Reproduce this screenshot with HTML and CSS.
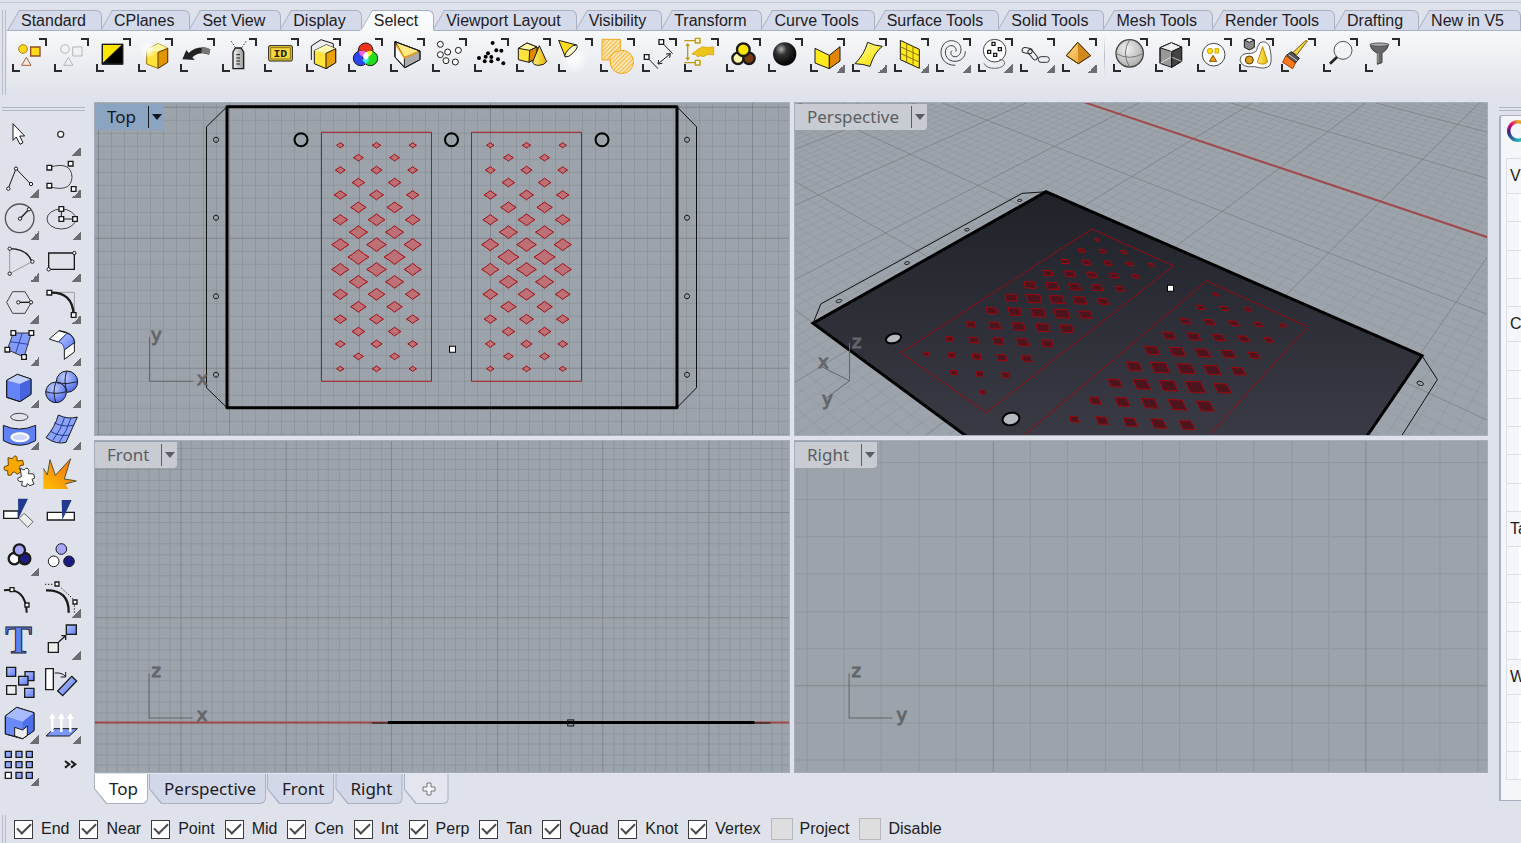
FILE: index.html
```html
<!DOCTYPE html>
<html lang="en">
<head>
<meta charset="utf-8">
<title>CAD workspace</title>
<link rel="stylesheet" href="styles.css">
</head>
<body>
<svg class="defs" width="0" height="0" aria-hidden="true">
  <defs>
    <linearGradient id="yl" x1="0" y1="0" x2="1" y2="1"><stop offset="0" stop-color="#fffbd0"/><stop offset=".5" stop-color="#ffee40"/><stop offset="1" stop-color="#f2d400"/></linearGradient>
    <linearGradient id="or" x1="0" y1="0" x2="1" y2="1"><stop offset="0" stop-color="#ffd98a"/><stop offset="1" stop-color="#e89a20"/></linearGradient>
    <linearGradient id="bl" x1="0" y1="0" x2="1" y2="1"><stop offset="0" stop-color="#b9c6ff"/><stop offset="1" stop-color="#5b7bf5"/></linearGradient>
    <linearGradient id="gr" x1="0" y1="0" x2="1" y2="0"><stop offset="0" stop-color="#f4f4f4"/><stop offset="1" stop-color="#9a9a9a"/></linearGradient>
    <linearGradient id="fire" x1="0" y1="1" x2="1" y2="0"><stop offset="0" stop-color="#ffc000"/><stop offset="1" stop-color="#ee6a1c"/></linearGradient>
    <linearGradient id="cone" x1="0" y1="0" x2="1" y2="0"><stop offset="0" stop-color="#fff27a"/><stop offset="1" stop-color="#e0b400"/></linearGradient>
    <radialGradient id="bk" cx=".35" cy=".3" r=".7"><stop offset="0" stop-color="#b0b0b0"/><stop offset=".35" stop-color="#333"/><stop offset="1" stop-color="#000"/></radialGradient>
    <radialGradient id="sp" cx=".4" cy=".35" r=".7"><stop offset="0" stop-color="#f0f0f0"/><stop offset="1" stop-color="#aaa"/></radialGradient>
    <radialGradient id="bs" cx=".4" cy=".3" r=".8"><stop offset="0" stop-color="#c3ceff"/><stop offset="1" stop-color="#3d5ee6"/></radialGradient>
    <radialGradient id="glow"><stop offset="0" stop-color="#fff"/><stop offset="1" stop-color="#fff" stop-opacity="0"/></radialGradient>
    <pattern id="hatch" width="9" height="9" patternUnits="userSpaceOnUse" patternTransform="rotate(45)"><rect width="9" height="9" fill="#fdeec8"/><rect width="4" height="9" fill="#f5b942"/></pattern>
  </defs>
</svg>

<header class="ribbon">
  <div class="grip-v"></div>
  <div class="ribbon-body">
    <nav class="tabs" aria-label="Toolbars">
      <button class="tab">Standard</button><button class="tab">CPlanes</button><button class="tab">Set View</button><button class="tab">Display</button><button class="tab active">Select</button><button class="tab">Viewport Layout</button><button class="tab">Visibility</button><button class="tab">Transform</button><button class="tab">Curve Tools</button><button class="tab">Surface Tools</button><button class="tab">Solid Tools</button><button class="tab">Mesh Tools</button><button class="tab">Render Tools</button><button class="tab">Drafting</button><button class="tab">New in V5</button>
    </nav>
    <div class="toolbar">
      <button class="tool pick" aria-label="Select all"><svg viewBox="24 102 126 126"><circle cx="69" cy="147" r="13" fill="#ffd91a" stroke="#b87818"/><path d="M92 141h28v27h-28z" fill="#ffd91a" stroke="#8f4f1c" stroke-width="4"/><path d="M79 172l14 24H65z" fill="#f4ebe4" stroke="#a8623a"/></svg></button>
      <button class="tool pick" aria-label="Select none"><svg viewBox="150 102 126 126" stroke="#b5b7ba" fill="none"><circle cx="195" cy="147" r="13"/><path d="M218 141h28v27h-28zM205 172l14 24h-28z"/></svg></button>
      <button class="tool pick" aria-label="Invert selection"><svg viewBox="276 102 126 126"><path d="M307 133h61l-61 59z" fill="#ffe600"/><path d="M368 133v59h-61z"/><path d="M307 133h61v59h-61z" fill="none" stroke-width="4"/></svg></button>
      <button class="tool pick" aria-label="Select last created"><svg viewBox="402 102 126 126"><path d="M440 148l35-17 28 14v42l-29 18-34-13z" fill="#ffe23a" stroke="#9a7400"/><path d="M440 148l35-17 28 14-29 12z" fill="#fff7a0" stroke="none"/><path d="M474 157l29-12v42l-29 18z" fill="#e09400" stroke="#5a3c00"/><circle cx="444" cy="150" r="26" fill="url(#glow)" stroke="none"/></svg></button>
      <button class="tool pick" aria-label="Select previous"><svg viewBox="528 102 126 126"><path d="M547 178l12-28 7 9q29-26 65-11l-4 16q-28-12-50 8l7 8z" fill="#222" stroke="none"/><path d="M606 140q14 0 25 8l-4 16q-11-6-23-5z" fill="#777" stroke="none"/></svg></button>
      <button class="tool pick" aria-label="Select by name"><svg viewBox="654 102 126 126"><path d="M699 156l7-12h17l8 12v50h-32z" fill="url(#gr)" stroke-width="4"/><path d="M709 164h11M709 174h11M709 183h11M709 192h11"/><path d="M694 124l13 20M738 124l-13 20" fill="none" stroke-dasharray="4 5"/></svg></button>
      <button class="tool pick" aria-label="Select by ID"><svg viewBox="780 102 126 126"><rect x="806" y="137" width="71" height="46" rx="4" fill="#f5d83c"/><rect x="812" y="143" width="59" height="34" fill="none" stroke="#8a7410"/><text x="841" y="172" text-anchor="middle" class="id-text">ID</text></svg></button>
      <button class="tool pick" aria-label="Select duplicates"><svg viewBox="906 102 126 126"><path d="M934 180v-42l29-19 37 12v30" fill="#eee"/><path d="M943 152l36-18 28 12v42l-29 18-35-15z" fill="#ffe23a"/><path d="M943 152l36-18 28 12-29 14z" fill="#fff9b5" stroke="none"/><path d="M978 160l29-14v42l-29 18z" fill="#eaa000"/></svg></button>
      <button class="tool pick" aria-label="Select by color"><svg viewBox="1032 102 126 126"><circle cx="1097" cy="151" r="22" fill="#f3321c"/><circle cx="1082" cy="175" r="22" fill="#2c45f0"/><circle cx="1111" cy="175" r="22" fill="#22dc22"/><g stroke="none"><path d="M1076 154q14-4 22 3l-1 16q-19-3-21-19z" fill="#f060e0"/><path d="M1098 157q8-7 20-3-3 16-21 19z" fill="#fff02a"/><path d="M1097 172l11 8-11 12-11-12z" fill="#40e8f8"/><path d="M1090 163l8-8 8 8-1 12-8 4-7-5z" fill="#fff"/></g></svg></button>
      <button class="tool pick" aria-label="Select surfaces"><svg viewBox="1158 102 126 126"><path d="M1185 125l75 28v26l-45 24-30-32z" fill="#aaa"/><path d="M1185 125l75 28-47 20z" fill="#ffe982"/><path d="M1185 125l28 48v30l-28-32z" fill="#fff"/><path d="M1254 156l-41 17-24-38" fill="none" stroke="#f0a018" stroke-width="5"/><path d="M1185 125l75 28v26l-45 24-30-32z" fill="none"/></svg></button>
      <button class="tool pick" aria-label="Select points"><svg viewBox="1284 102 126 126" fill="#fff"><circle cx="1321" cy="133" r="9"/><circle cx="1375" cy="151" r="9"/><circle cx="1343" cy="156" r="9"/><circle cx="1321" cy="164" r="9"/><circle cx="1338" cy="182" r="9"/><circle cx="1366" cy="186" r="9"/></svg></button>
      <button class="tool pick" aria-label="Select point clouds"><svg viewBox="1410 102 126 126" stroke="none"><circle cx="1478" cy="129" r="6"/><circle cx="1489" cy="151" r="6"/><circle cx="1504" cy="152" r="6"/><circle cx="1464" cy="160" r="6"/><circle cx="1437" cy="174" r="6"/><circle cx="1457" cy="170" r="6"/><circle cx="1474" cy="171" r="6"/><circle cx="1454" cy="184" r="6"/><circle cx="1474" cy="184" r="6"/><circle cx="1494" cy="178" r="6"/><circle cx="1510" cy="190" r="6"/></svg></button>
      <button class="tool pick" aria-label="Select polysurfaces"><svg viewBox="36 102 126 126"><path d="M55 145l26-16 30 12v32l-24 14-32-8z" fill="#ffe23a"/><path d="M55 145l26-16 30 12-22 10z" fill="#fff7a0"/><path d="M89 151l22-10v32l-24 14z" fill="#e08a00"/><path d="M118 137l22 48q-8 11-24 11t-18-10z" fill="url(#cone)"/></svg></button>
      <button class="tool pick" aria-label="Select open surfaces"><svg viewBox="162 102 126 126"><circle cx="222" cy="178" r="44" fill="url(#glow)" stroke="none"/><path d="M176 121l54 14q-4 26-34 36z" fill="#ffd91a"/><path d="M230 135q6 6-9 22t-25 14q-5-6 9-22t25-14z" fill="#fff9cc"/></svg></button>
      <button class="tool pick" aria-label="Select hatches"><svg viewBox="288 102 126 126" stroke="#f0a820"><path d="M306 118h55v33a35 35 0 1 1-30 29h-25z" fill="url(#hatch)"/><path d="M328 180q4-24 34-29" fill="none"/></svg></button>
      <button class="tool pick" aria-label="Select dimensions"><svg viewBox="414 102 126 126"><path d="M477 119h14v14h-14zM433 164h14v14h-14z" fill="#fff" stroke-width="4"/><path d="M493 135l25 26M449 180l25 26M474 192l37-31M474 192l2-12M474 192l13-2M511 161l-13 1M511 161l-2 12" fill="none"/></svg></button>
      <button class="tool pick" aria-label="Select blocks"><svg viewBox="540 102 126 126" stroke="#c09a10"><path d="M553 122h50M553 188h50M563 134v43M558 138l5-6 5 6M558 173l5 6 5-6" fill="none" stroke-width="4"/><path d="M586 115h14v14h-14zM586 181h14v14h-14z" fill="#fff7d0" stroke-width="4"/><path d="M576 162l18-14 14-8 14 3 19-2v24l-17-2-14 7-9-3-8 4-5-7z" fill="#eec31c" stroke="#d9ae18"/></svg></button>
      <button class="tool pick" aria-label="Select groups"><svg viewBox="666 102 126 126" stroke-width="7"><circle cx="714" cy="175" r="17" fill="#fff6a8"/><circle cx="747" cy="175" r="17" fill="#7a3c10"/><circle cx="730" cy="149" r="19" fill="#ffe600"/></svg></button>
      <button class="tool pick" aria-label="Select by material"><svg viewBox="792 102 126 126"><circle cx="854" cy="162" r="35" fill="url(#bk)" stroke="none"/></svg></button>
      <button class="tool pick more" aria-label="Select polysurface types"><svg viewBox="918 102 126 126"><path d="M945 145l43 21v40l-43-17z" fill="#ffe81c"/><path d="M988 166l32-26v43l-32 23z" fill="#e08600"/></svg></button>
      <button class="tool pick more" aria-label="Select surface types"><svg viewBox="1044 102 126 126"><path d="M1103 127q20 10 44 12-24 18-37 60-20-7-45-8 28-28 38-64z" fill="url(#yl)"/></svg></button>
      <button class="tool pick more" aria-label="Select meshes"><svg viewBox="1170 102 126 126"><path d="M1201 121l57 27v57l-57-26z" fill="#ffe81c"/><path d="M1220 130v57M1239 139v57M1201 140l57 27M1201 160l57 26" fill="none" stroke="#8a7800"/></svg></button>
      <button class="tool pick more" aria-label="Select curves"><svg viewBox="1296 102 126 126" fill="none" stroke="#444"><path d="M1366 196C1335 196 1323 175 1323 158C1323 135 1338 122 1354 122C1373 122 1384 135 1383 150C1382 166 1370 172 1362 170C1352 167 1350 157 1356 152M1396 154C1396 172 1382 184 1365 184C1347 184 1336 172 1336 156C1337 142 1346 136 1356 137C1366 139 1371 148 1367 155"/></svg></button>
      <button class="tool pick more" aria-label="Select control points"><svg viewBox="1422 102 126 126"><circle cx="1484" cy="152" r="34" fill="#fff" stroke="#444"/><g fill="#fff" stroke-width="4"><path d="M1476 127h9v9h-9zM1495 143h9v9h-9zM1463 151h9v9h-9zM1481 160h9v9h-9z"/></g><path d="M1452 190q8 16 34 15 28-2 28-18-3-10-16-9" fill="none" stroke="#666"/></svg></button>
      <button class="tool pick more" aria-label="Select chain"><svg viewBox="48 102 126 126" fill="none" stroke="#333"><rect x="66" y="144" width="31" height="16" rx="8" transform="rotate(12 82 152)"/><rect x="80" y="157" width="36" height="14" rx="7" transform="rotate(50 98 164)"/><rect x="115" y="170" width="33" height="17" rx="8"/></svg></button>
      <button class="tool pick more" aria-label="Select objects"><svg viewBox="174 102 126 126"><path d="M233 127l-34 40 36 24 37-24z" fill="url(#or)" stroke="#6a4408"/><path d="M233 127l2 64 37-24z" fill="#d08a1c" stroke="none"/><path d="M233 127l-34 40 36 24 37-24z" fill="none" stroke="#4a2c00"/></svg></button>
      <span class="divider"></span>
      <button class="tool pick" aria-label="Sphere filter"><svg viewBox="327 102 126 126"><circle cx="389" cy="160" r="41" fill="url(#sp)" stroke="#444" stroke-width="4"/><path d="M389 119q-26 40 0 82M348 160q40 24 82 0" fill="none" stroke="#777"/></svg></button>
      <button class="tool pick" aria-label="Box filter"><svg viewBox="453 102 126 126"><path d="M480 143l34-15 31 13v43l-30 18-35-12z" fill="#999"/><path d="M480 143l34-15 31 13-30 14z" fill="#eee"/><path d="M515 155l30-14v43l-30 18z" fill="#444"/><path d="M514 128v43l31 13M514 171l-34 19" fill="none" stroke="#fff" stroke-width="2"/><path d="M515 155v47M480 143v47" fill="none"/></svg></button>
      <button class="tool pick" aria-label="Boundary filter"><svg viewBox="579 102 126 126"><circle cx="641" cy="164" r="34" fill="#fff" stroke="#444"/><circle cx="630" cy="153" r="8" fill="#ffdc1c" stroke="#d8a800"/><path d="M645 146h11v13h-11z" fill="#ffdc1c" stroke="#d8a800"/><path d="M639 166l11 18h-22z" fill="#f0a000" stroke="#8a4c10"/></svg></button>
      <button class="tool pick" aria-label="Lasso filter"><svg viewBox="705 102 126 126"><path d="M780 128q18-8 28 10 10 40 2 58-14 14-46 4-40 4-44-20 2-22 32-20 20-2 20-18z" fill="#fff" stroke="#555"/><path d="M733 120l15-5 15 5v22l-15 8-15-8z" fill="#888"/><path d="M733 120l15-5 15 5-15 7z" fill="#eee"/><circle cx="748" cy="180" r="12" fill="#e0a018" stroke="#5a3c08"/><path d="M788 140l15 46q-14 12-31 1z" fill="url(#cone)" stroke="#d08000"/></svg></button>
      <button class="tool pick" aria-label="Paint filter"><svg viewBox="831 102 126 126"><path d="M922 123l-32 42-12-7 36-34q6-4 8-1z" fill="#f0d040" stroke="#806000"/><path d="M874 155l24 20-12 14-28-22z" fill="#555"/><path d="M858 167l28 22-8 17-30-19z" fill="#ff7a1c" stroke="#a03c00"/><path d="M866 164l26 19" stroke="#ddd"/></svg></button>
      <button class="tool pick" aria-label="Find"><svg viewBox="957 102 126 126"><circle cx="1029" cy="151" r="27" fill="#f2f3f5" stroke="#555"/><path d="M1011 171l-21 20" fill="none" stroke="#222" stroke-width="8"/><path d="M1012 150q2-16 20-18" stroke="#fff" fill="none" stroke-width="5"/></svg></button>
      <button class="tool pick" aria-label="Selection filter"><svg viewBox="1083 102 126 126"><path d="M1110 134h56q-2 14-20 26v28l-14 5v-33q-20-10-22-26z" fill="#666" stroke="#444"/><ellipse cx="1138" cy="134" rx="28" ry="5" fill="#aaa" stroke="#555"/><path d="M1134 160v28" stroke="#aaa"/></svg></button>
    </div>
  </div>
</header>

<main class="workspace">
  <aside class="side">
    <div class="grip-h"></div>
    <div class="side-tools">
      <button class="tool" aria-label="Cancel"><svg viewBox="0 66 126 126"><path d="M39 86v50l10-10 11 22 9-5-10-20h15z" fill="#fff"/></svg></button>
      <button class="tool more" aria-label="Point"><svg viewBox="126 66 126 126"><circle cx="182" cy="118" r="9" fill="#fff" stroke="#333" stroke-width="4"/></svg></button>
      <button class="tool more" aria-label="Polyline"><svg viewBox="0 192 126 126" fill="#fff"><path d="M25 280l23-59 44 46" fill="none"/><circle cx="48" cy="221" r="5"/><circle cx="25" cy="281" r="5"/><circle cx="93" cy="267" r="5"/></svg></button>
      <button class="tool more" aria-label="Curve"><svg viewBox="126 192 126 126" fill="#fff"><path d="M148 217q66-20 68 30-3 46-68 28" fill="none" stroke="#444"/><path d="M141 211h14v14h-14zM205 199h14v14h-14zM141 265h14v14h-14zM214 275h14v14h-14z" stroke-width="4"/></svg></button>
      <button class="tool more" aria-label="Circle"><svg viewBox="0 318 126 126" fill="#fff"><circle cx="59" cy="370" r="43" fill="none" stroke="#555" stroke-width="4"/><path d="M60 371l27-28" stroke-width="4"/><circle cx="60" cy="371" r="5"/><circle cx="87" cy="343" r="5"/></svg></button>
      <button class="tool more" aria-label="Ellipse"><svg viewBox="126 318 126 126" fill="#fff"><ellipse cx="184" cy="372" rx="43" ry="30" fill="none" stroke="#444"/><path d="M184 342v30h40" fill="none"/><path d="M177 335h14v14h-14zM177 365h14v14h-14zM218 365h14v14h-14z" stroke-width="4"/></svg></button>
      <button class="tool more" aria-label="Arc"><svg viewBox="0 444 126 126" fill="#fff"><path d="M29 461v75l67-36" fill="none" stroke="#999"/><path d="M29 461q52 0 67 39" fill="none" stroke-width="4"/><circle cx="29" cy="461" r="5"/><circle cx="29" cy="536" r="5"/><circle cx="97" cy="500" r="5"/></svg></button>
      <button class="tool more" aria-label="Rectangle"><svg viewBox="126 444 126 126" fill="#fff"><path d="M146 474h77v49h-77z" fill="none" stroke-width="4"/><circle cx="223" cy="474" r="5"/><circle cx="146" cy="523" r="5"/></svg></button>
      <button class="tool more" aria-label="Polygon"><svg viewBox="0 570 126 126" fill="#fff"><path d="M38 590h37l19 32-19 33H38l-18-33z" fill="none" stroke="#444"/><path d="M55 622h38" stroke-width="4"/><circle cx="55" cy="622" r="5"/><circle cx="93" cy="622" r="5"/></svg></button>
      <button class="tool more" aria-label="Fillet curves"><svg viewBox="126 570 126 126" fill="#fff"><path d="M148 592h75v68" fill="none" stroke="#999"/><path d="M148 593q70-4 73 67" fill="none" stroke-width="7"/><path d="M141 586h14v14h-14zM214 653h14v14h-14z" stroke-width="4"/></svg></button>
      <button class="tool more" aria-label="Surface from points"><svg viewBox="0 696 126 126"><path d="M40 714h54l-22 72-50-22z" fill="#839bfa" stroke="#333"/><path d="M67 714l-20 60M31 740l55 8" fill="none" stroke="#2c45a8"/><g fill="#fff" stroke-width="4"><path d="M33 707h14v14H33zM87 707h14v14H87zM15 757h14v14H15zM65 779h14v14H65z"/></g></svg></button>
      <button class="tool more" aria-label="Loft"><svg viewBox="126 696 126 126" fill="#fff"><path d="M148 732l29-25 24 8-26 26z"/><path d="M176 741l25-26q22 8 23 28l-31 22q-1-20-17-24z" fill="url(#bl)" stroke="#3050b8"/><path d="M193 765l30-22v28l-30 22z"/><path d="M177 707q46 4 47 38" fill="none"/></svg></button>
      <button class="tool more" aria-label="Box"><svg viewBox="0 822 126 126"><path d="M20 856l32-18 41 14v46l-33 22-40-13z" fill="#6684fa"/><path d="M20 856l32-18 41 14-33 15z" fill="#c2ceff" stroke="none"/><path d="M60 867l33-15v46l-33 22z" fill="#4564de" stroke="none"/><path d="M20 856l32-18 41 14v46l-33 22-40-13z" fill="none"/></svg></button>
      <button class="tool more" aria-label="Boolean union"><svg viewBox="126 822 126 126"><circle cx="201" cy="860" r="32" fill="url(#bs)"/><circle cx="168" cy="892" r="31" fill="url(#bs)"/><path d="M137 890q30 10 62 0M168 861q-12 30 0 62M172 864q28 6 60-4M200 828q-10 30 0 60" fill="none" stroke="#223"/></svg></button>
      <button class="tool more" aria-label="Cylinder surface"><svg viewBox="0 948 126 126"><ellipse cx="58" cy="966" rx="26" ry="11" fill="none" stroke="#444"/><path d="M10 991q48 22 97 0v46q-48 28-97 0z" fill="#6080f5"/><ellipse cx="60" cy="1027" rx="26" ry="12" fill="#cfd8ff" stroke="#fff" stroke-width="6"/></svg></button>
      <button class="tool more" aria-label="Mesh"><svg viewBox="126 948 126 126"><path d="M175 960q28 14 57 6l-34 76q-28 8-60-14 28-34 37-68z" fill="#8ba3fb"/><path d="M194 967q-10 36-36 70M213 969q-12 38-36 74M163 984q30 14 60 6M150 1008q28 18 58 12" fill="none" stroke="#223a90"/></svg></button>
      <button class="tool" aria-label="Join"><svg viewBox="0 39 126 126"><path d="M24 53l13 3q8-14 14-4v11l17-2 3 14-11 2q-6 12 4 17l-12 9-8-7q-9-1-10 9l-10 1-1-14q-14 2-10-12l12-4z" fill="#f9a800" stroke="#704400"/><path d="M61 85l11 5q10-12 15 2l-2 9 16 1 3 12-8 4 6 14-12 5-8-6-3 9-14-3 2-13q-16 3-13-10l10-4z" fill="#fff" stroke="#333"/></svg></button>
      <button class="tool" aria-label="Explode"><svg viewBox="126 39 126 126"><path d="M130 147V85l12 20 8-46 16 47 46-50-19 61 36 4-33 12 10 14z" fill="url(#fire)" stroke="none"/><path d="M130 85l12 20 8-46 16 47 46-50-19 61 36 6-34 9" fill="none" stroke="#553"/></svg></button>
      <button class="tool" aria-label="Trim"><svg viewBox="0 165 126 126"><path d="M11 213h44v22H11z" fill="#fff" stroke-width="4"/><path d="M57 235l15-15 27 25-16 17z" fill="#eee" stroke="#666"/><path d="M54 176h30l-29 60z" fill="#23398e" stroke="none"/></svg></button>
      <button class="tool" aria-label="Split"><svg viewBox="126 165 126 126"><path d="M142 217h81v23h-81z" fill="#fff" stroke-width="4"/><path d="M185 180h30l-28 60z" fill="#23398e" stroke="none"/></svg></button>
      <button class="tool more" aria-label="Group"><svg viewBox="0 291 126 126" stroke-width="7"><circle cx="43" cy="356" r="17" fill="#fff"/><circle cx="74" cy="356" r="17" fill="#1c1c80"/><circle cx="58" cy="330" r="17" fill="#a8a6fa"/></svg></button>
      <button class="tool" aria-label="Ungroup"><svg viewBox="126 291 126 126"><circle cx="184" cy="327" r="16" fill="#a8a6fa"/><circle cx="161" cy="364" r="16" fill="#fff"/><circle cx="207" cy="364" r="16" fill="#1c1c80"/></svg></button>
      <button class="tool" aria-label="Edit points"><svg viewBox="0 417 126 126"><path d="M12 451q66-8 68 67" fill="none" stroke-width="6"/><path d="M30 443h12v12H30zM75 489h12v12H75z" fill="#fff" stroke-width="4"/></svg></button>
      <button class="tool more" aria-label="Control points"><svg viewBox="126 417 126 126"><path d="M138 451q70-2 68 67" fill="none" stroke-width="7"/><path d="M135 433h26M184 444l36 34M223 496v24" fill="none" stroke-dasharray="4 5"/><path d="M165 426h12v12h-12zM219 480h12v12h-12z" fill="#fff" stroke-width="4"/></svg></button>
      <button class="tool" aria-label="Text"><svg viewBox="0 543 126 126"><text x="56" y="638" text-anchor="middle" class="t-icon">T</text></svg></button>
      <button class="tool more" aria-label="Move"><svg viewBox="126 543 126 126"><path d="M145 608h30v29h-30z" fill="#eee" stroke-width="4"/><path d="M199 555h30v28h-30z" fill="url(#bl)" stroke-width="4"/><path d="M176 606l20-18M184 587h13v13" fill="none" stroke-width="4"/></svg></button>
      <button class="tool" aria-label="Copy"><svg viewBox="0 669 126 126" fill="url(#bl)" stroke-width="4"><path d="M20 682h27v27H20z"/><path d="M75 695h27v27H75z"/><path d="M56 709h28v26H56z"/><path d="M74 745h28v27H74z"/><path d="M20 737h28v26H20z" fill="#eee"/></svg></button>
      <button class="tool" aria-label="Rotate"><svg viewBox="126 669 126 126"><path d="M137 686h23v63h-23z" fill="#fff" stroke-width="4"/><path d="M215 709l15 14-42 44-15-14z" fill="url(#bl)" stroke-width="4"/><path d="M164 699q22-2 32 10M197 696v15h-15" fill="none"/></svg></button>
      <button class="tool more" aria-label="Boolean difference"><svg viewBox="0 795 126 126"><path d="M16 828l34-26 52 16v54l-34 24-52-14z" fill="#6a8afa"/><path d="M16 828l34-26 52 16-34 27z" fill="#a9bbff" stroke="none"/><path d="M68 845l34-27v54l-34 24z" fill="#4e70ea" stroke="none"/><path d="M16 828l34-26 52 16v54l-34 24-52-14z" fill="none"/><path d="M44 862l24 8 14-12v28l-14 10-24-8z" fill="#eee"/></svg></button>
      <button class="tool more" aria-label="Project to plane"><svg viewBox="126 795 126 126"><path d="M162 866h70l-24 22h-70z" fill="#7c98fa"/><path d="M157 876v-52M184 876v-52M211 876v-52" stroke="#fff" stroke-width="7"/><path d="M147 836l10-17 10 17zM174 836l10-17 10 17zM201 836l10-17 10 17z" fill="#fff" stroke="none"/></svg></button>
      <button class="tool more" aria-label="Array"><svg viewBox="0 921 126 126" fill="#8fa5fa" stroke-width="4"><path d="M16 934h18v18H16zM48 934h18v18H48zM79 934h18v18H79zM16 965h18v18H16zM48 965h18v18H48zM79 965h18v18H79zM48 997h18v18H48zM79 997h18v18H79z"/><path d="M16 997h18v18H16z" fill="#fff"/></svg></button>
      <button class="tool" aria-label="More tools"><svg viewBox="126 921 126 126" fill="none" stroke-width="6"><path d="M195 963l13 10-13 10M213 963l13 10-13 10"/></svg></button>
    </div>
  </aside>

  <section class="center">
    <div class="viewports">
      <div class="viewport active"><svg class="scene" id="scene-top" viewBox="95 103 694 332" preserveAspectRatio="xMidYMid slice"></svg><button class="view-title"><span class="view-name">Top</span><span class="caret"></span></button></div>
      <div class="viewport"><svg class="scene" id="scene-persp" viewBox="795 103 692 332" preserveAspectRatio="xMidYMid slice"></svg><button class="view-title"><span class="view-name">Perspective</span><span class="caret"></span></button></div>
      <div class="viewport"><svg class="scene" id="scene-front" viewBox="95 441 694 331" preserveAspectRatio="xMidYMid slice"></svg><button class="view-title"><span class="view-name">Front</span><span class="caret"></span></button></div>
      <div class="viewport"><svg class="scene" id="scene-right" viewBox="795 441 692 331" preserveAspectRatio="xMidYMid slice"></svg><button class="view-title"><span class="view-name">Right</span><span class="caret"></span></button></div>
    </div>
    <nav class="view-tabs" aria-label="Viewports">
      <button class="view-tab current">Top</button><button class="view-tab">Perspective</button><button class="view-tab">Front</button><button class="view-tab">Right</button><button class="view-tab add" aria-label="New viewport"><svg viewBox="0 0 14 14" width="14" height="14"><path d="M5 1h4v4h4v4H9v4H5V9H1V5h4z" fill="#f4f5f8" stroke="#777" stroke-width="1"/></svg></button>
    </nav>
  </section>

  <aside class="props">
    <div class="grip-h"></div>
    <div class="panel">
      <div class="panel-tab"><span class="ring"></span></div>
      <div class="list">
        <div class="head">Vi</div><div class="row"></div><div class="row"></div><div class="row"></div><div class="row"></div>
        <div class="head">C</div><div class="row"></div><div class="row"></div><div class="row"></div><div class="row"></div><div class="row"></div><div class="row"></div>
        <div class="head">Ta</div><div class="row"></div><div class="row"></div><div class="row"></div><div class="row"></div>
        <div class="head">W</div><div class="row"></div><div class="row"></div><div class="row"></div>
      </div>
    </div>
  </aside>
</main>

<footer class="osnap">
  <div class="grip-v"></div>
  <label><input type="checkbox" checked>End</label>
  <label><input type="checkbox" checked>Near</label>
  <label><input type="checkbox" checked>Point</label>
  <label><input type="checkbox" checked>Mid</label>
  <label><input type="checkbox" checked>Cen</label>
  <label><input type="checkbox" checked>Int</label>
  <label><input type="checkbox" checked>Perp</label>
  <label><input type="checkbox" checked>Tan</label>
  <label><input type="checkbox" checked>Quad</label>
  <label><input type="checkbox" checked>Knot</label>
  <label><input type="checkbox" checked>Vertex</label>
  <label class="flat"><input type="checkbox">Project</label>
  <label class="flat"><input type="checkbox">Disable</label>
</footer>
<script src="scene.js"></script>
</body>
</html>
```
FILE: styles.css
```css
* { box-sizing: border-box; }
body {
  margin: 0;
  height: 100vh;
  display: flex;
  flex-direction: column;
  overflow: hidden;
  background: #dfe2ea;
  color: #1c1c24;
  font: 16px/20px "Liberation Sans", Arial, sans-serif;
}
button { border: 0; padding: 0; background: none; color: inherit; font: inherit; }
.defs { position: absolute; }

.grip-v { flex: none; width: 4px; border: 1px solid #b8bdc9; border-width: 0 1px; }
.grip-h { flex: none; height: 4px; border: 1px solid #b0b6c4; border-width: 1px 0; }

/* Ribbon */
.ribbon {
  display: flex;
  gap: 1px;
  padding: 7px 0 0 2px;
  margin-top: 2px;
  border-top: 1px solid #c3c8d4;
}
.ribbon .grip-v { margin-bottom: 2px; }
.ribbon-body { flex: 1; min-width: 0; }
.tabs { display: flex; height: 21px; border-bottom: 1px solid #aab2c4; }
.tab {
  position: relative;
  isolation: isolate;
  flex: none;
  height: 21px;
  padding: 0 16px 0 14px;
  margin-right: -2px;
  white-space: nowrap;
}
.tab:last-child { flex: 1; text-align: left; margin-right: 0; }
.tab::before, .tab::after {
  content: "";
  position: absolute;
  z-index: -1;
  top: 0;
  bottom: 0;
  background: #d5daea;
  border: 1px solid #a8b0c3;
}
.tab::before { left: 14px; right: 0; border-left: 0; border-radius: 0 6px 0 0; }
.tab::after {
  left: 0;
  width: 14px;
  border-right: 0;
  transform: skewX(-30deg);
  transform-origin: left bottom;
}
.tab.active { z-index: 1; }
.tab.active::before, .tab.active::after { background: #f9fafb; border-bottom-color: #f9fafb; }

.toolbar {
  display: flex;
  height: 66px;
  padding: 3px 0 0 1px;
  background: linear-gradient(#f7f8fa, #dfe2ea);
}
.divider { width: 1px; height: 40px; margin: 2px 4px; background: linear-gradient(transparent, #b8bcc6, transparent); }
.tool { position: relative; flex: none; width: 42px; height: 42px; stroke: #1a1a1a; stroke-width: 3; }
.tool svg { display: block; width: 42px; height: 42px; overflow: visible; }
.pick::before, .pick::after { content: ""; position: absolute; width: 6px; height: 6px; border: 0 solid #2a2a2c; }
.pick::before { left: 31px; top: 4px; border-width: 2px 2px 0 0; }
.pick::after { left: 4px; top: 30px; border-width: 0 0 2px 2px; }
.more { background: linear-gradient(135deg, transparent 50%, #6d6e72 50%) 30px 30px / 9px 9px no-repeat; }
.id-text { font: bold 34px "Liberation Mono", monospace; fill: #222; stroke: none; }
.t-icon { font: bold 120px "Liberation Serif", serif; fill: #5f80f0; stroke: #223; }

/* Workspace */
.workspace { flex: 1; display: flex; min-height: 0; }
.side { flex: none; width: 94px; padding: 10px 9px 0 2px; }
.side-tools { display: grid; grid-template-columns: 42px 42px; margin: 6px 0 0 -2px; }
.center { flex: 1; min-width: 0; display: flex; flex-direction: column; padding-top: 5px; }
.viewports {
  flex: 1;
  min-height: 0;
  display: grid;
  grid-template: 1fr 1fr / 348fr 347fr;
  gap: 4px;
}
.viewport { position: relative; min-height: 0; overflow: hidden; border: 1px solid #a5adbd; background: #9ca3aa; }
.scene { display: block; width: 100%; height: 100%; }
.view-title {
  position: absolute;
  top: 1px;
  left: 0;
  display: flex;
  align-items: center;
  height: 26px;
  padding: 0 2px 0 12px;
  border-radius: 0 0 4px 0;
  background: #c8ccd2;
  color: #5a5d62;
  font: 17px/24px "Noto Sans", "Open Sans", sans-serif;
}
.view-name { margin-right: 12px; }
.caret { width: 14px; height: 22px; border-left: 1px solid currentColor; display: flex; align-items: center; justify-content: flex-end; }
.caret::before { content: ""; border: 5px solid transparent; border-top: 6px solid currentColor; border-bottom: 0; }
.active > .view-title { background: #8aa4c2; color: #15171c; border-radius: 0; }

.grid-minor { fill: none; stroke: #7f868e; stroke-opacity: .42; }
.grid-major { fill: none; stroke: #77757b; stroke-opacity: .6; }
.grid-fine { opacity: .6; }
.axis-red { stroke: #a04a4c; stroke-width: 2; fill: none; }
.gnomon { stroke: #63666b; fill: none; }
.axis-name { font: 18px "DejaVu Sans", sans-serif; fill: #63666b; stroke: #63666b; stroke-width: 1; }
.edge-thick { stroke: #000; stroke-width: 3; fill: none; stroke-linejoin: round; }
.edge-thin { stroke: #111; stroke-width: 1; fill: none; }
.hole { stroke: #000; stroke-width: 2; fill: none; }
.vent-frame { stroke: #a31b20; stroke-width: 1; fill: none; }
.vent { stroke: #a30a10; stroke-width: 1; fill: #bd7176; }
.plate { fill: url(#plate-fill); stroke: #000; stroke-width: 3; }
.plate-hole { fill: #b4babf; stroke: #000; stroke-width: 2; }
.plate-frame { stroke: #960a12; stroke-width: 1; fill: none; }
.plate-vent { stroke: #a0060e; stroke-width: 1; fill: #4c151d; }
.handle { fill: #fff; stroke: #000; stroke-width: 1; }

/* Viewport tabs */
.view-tabs { display: flex; gap: 1px; height: 30px; margin: 1px 0 11px; font: 17px/28px "Noto Sans", "Open Sans", sans-serif; }
.view-tab {
  position: relative;
  isolation: isolate;
  height: 30px;
  padding: 0 10px 0 15px;
  background: #a9b0c2;
  border-radius: 0 0 6px 0;
  clip-path: polygon(0 0, 100% 0, 100% 100%, 12px 100%, 0 50%);
}
.view-tab::before {
  content: "";
  position: absolute;
  z-index: -1;
  inset: 0 1px 1px;
  background: #d3d8e9;
  border-radius: 0 0 5px 0;
  clip-path: polygon(0 0, 100% 0, 100% 100%, 12px 100%, 0 50%);
}
.view-tab.current::before { background: #fff; }
.view-tab.add { padding: 0 13px 0 18px; }
.view-tab.add::before { background: #e3e6ee; }
.view-tab.add svg { display: block; }

/* Property panel */
.props { flex: none; width: 33px; padding: 10px 0 14px 11px; display: flex; flex-direction: column; }
.panel { flex: 1; display: flex; flex-direction: column; margin-top: 4px; padding: 0 0 20px 5px; background: #f5f6f9; border: 1px solid #a9b0c2; border-width: 1px 0 1px 2px; border-radius: 3px 0 0 0; overflow: hidden; }
.panel-tab { flex: none; height: 42px; padding: 4px 0 0 1px; }
.ring {
  display: block;
  width: 22px;
  height: 22px;
  border-radius: 50%;
  background: radial-gradient(#f5f6f9 0 7px, transparent 8px), conic-gradient(#f0a020, #80c030 25%, #20b0c0 50%, #302880 72%, #e01070 88%, #f0a020);
}
.list { flex: 1; display: flex; flex-direction: column; border: 1px solid #dcdee5; border-width: 1px 0 0 1px; }
.head { flex: 35 0 0; display: flex; align-items: center; padding-left: 3px; border-bottom: 1px solid #dcdee5; overflow: hidden; }
.row { flex: 28 0 0; border-bottom: 1px solid #dcdee5; background: linear-gradient(90deg, #f5f6f9 12px, #fff 12px); }

/* Object snaps */
.osnap { display: flex; align-items: center; height: 28px; padding-left: 2px; }
.osnap .grip-v { align-self: stretch; margin-right: 8px; }
.osnap label { display: flex; align-items: center; gap: 8px; margin-right: 10px; }
.osnap input {
  appearance: none;
  width: 19px;
  height: 19px;
  margin: 0;
  display: grid;
  place-items: center;
  background: #fff;
  border: 1px solid #3c3c40;
}
.osnap input:checked::after {
  content: "";
  width: 12px;
  height: 6px;
  margin-bottom: 4px;
  border: solid #4a4a4e;
  border-width: 0 0 2px 2px;
  transform: rotate(-45deg);
}
.osnap .flat { gap: 7px; }
.osnap .flat input { width: 22px; height: 22px; background: #dededf; border-color: #b9babd; }
```
FILE: scene.js
```js
(function () {
  const PLATE = { l: 227, t: 107, r: 677, b: 408 };
  const VENTS = [322, 472];
  const fmt = n => n.toFixed(1);

  const path = (pts, close) => 'M' + pts.map(p => fmt(p[0]) + ' ' + fmt(p[1])).join('L') + (close ? 'Z' : '');
  const shape = (cls, d) => `<path class="${cls}" d="${d}"/>`;
  const label = (x, y, s) => `<text class="axis-name" x="${x}" y="${y}">${s}</text>`;
  const handle = (x, y) => `<rect class="handle" x="${x - 3}" y="${y - 3}" width="6" height="6"/>`;

  function circle(cx, cy, r) {
    const pts = [];
    for (let a = 0; a < 16; a++) pts.push([cx + r * Math.cos(a * Math.PI / 8), cy + r * Math.sin(a * Math.PI / 8)]);
    return pts;
  }

  function flatGrid(x0, y0, step, box) {
    let minor = '', major = '';
    for (let i = -80; i < 80; i++) {
      const x = Math.round(x0 + i * step) + .5, y = Math.round(y0 + i * step) + .5;
      let d = '';
      if (x > box[0] && x < box[2]) d += `M${x} ${box[1]}V${box[3]}`;
      if (y > box[1] && y < box[3]) d += `M${box[0]} ${y}H${box[2]}`;
      if (i % 10) minor += d; else major += d;
    }
    return shape('grid-minor', minor) + shape('grid-major', major);
  }

  const flanges = [
    [[227, 107], [206.5, 127], [206.5, 388], [227, 408]],
    [[677, 107], [696.5, 127], [696.5, 388], [677, 408]]
  ];
  const plate = [[PLATE.l, PLATE.t], [PLATE.r, PLATE.t], [PLATE.r, PLATE.b], [PLATE.l, PLATE.b]];
  const smallHoles = [], bigHoles = [301, 451.5, 602].map(x => circle(x, 140, 6.5));
  for (const x of [216, 687]) for (const y of [140, 218, 296.5, 375]) smallHoles.push(circle(x, y, 2.5));

  const frames = VENTS.map(x => [[x - .5, 132.5], [x + 109.5, 132.5], [x + 109.5, 381.5], [x - .5, 381.5]]);
  const vents = [];
  for (const x of VENTS) {
    for (let k = 0; k < 19; k++) {
      const cols = k % 2 ? [1, 3] : [0, 2, 4];
      for (const c of cols) {
        const side = c === 0 || c === 4 ? .88 : 1, d = Math.abs(k - 9);
        const w = (10.5 - d * .7) * side, h = (7.4 - d * .5) * side;
        const cx = x + 18.3 + c * 18.1, cy = 145.5 + k * 12.42;
        vents.push([[cx - w, cy], [cx - w * .45, cy - h * .5], [cx, cy - h], [cx + w * .45, cy - h * .5], [cx + w, cy], [cx + w * .45, cy + h * .5], [cx, cy + h], [cx - w * .45, cy + h * .5]]);
      }
    }
  }

  document.getElementById('scene-top').innerHTML =
    flatGrid(98, 107, 13.07, [94, 102, 790, 436]) +
    flanges.map(f => shape('edge-thin', path(f))).join('') +
    smallHoles.map(h => shape('edge-thin', path(h, true))).join('') +
    bigHoles.map(h => shape('hole', path(h, true))).join('') +
    frames.map(f => shape('vent-frame', path(f, true))).join('') +
    shape('vent', vents.map(v => path(v, true)).join('')) +
    shape('edge-thick', path(plate, true)) + handle(452.5, 349.5) +
    shape('gnomon', 'M149.5 337V381.5H193') + label(151, 341, 'y') + label(197, 385, 'x');

  document.getElementById('scene-front').innerHTML =
    flatGrid(180.5, 511.5, 10.54, [94, 440, 790, 773]) +
    shape('axis-red', 'M94 722H790') +
    shape('edge-thin', 'M372 722.5H770') + shape('edge-thick', 'M388 722H754') +
    '<rect class="edge-thin" x="567.5" y="719.5" width="6" height="6"/>' +
    shape('gnomon', 'M149.5 673V717.5H193') + label(152, 677, 'z') + label(197, 721, 'x');

  document.getElementById('scene-right').innerHTML =
    flatGrid(993, 685, 37.2, [794, 440, 1488, 773]) +
    shape('gnomon', 'M849.5 673V717.5H893') + label(852, 677, 'z') + label(897, 721, 'y');

  /* Plane-to-screen homography solved from four known corners. */
  function solve(pairs) {
    const m = [];
    for (const [[x, y], [u, v]] of pairs) {
      m.push([x, y, 1, 0, 0, 0, -u * x, -u * y, u]);
      m.push([0, 0, 0, x, y, 1, -v * x, -v * y, v]);
    }
    for (let i = 0; i < 8; i++) {
      let p = i;
      for (let r = i; r < 8; r++) if (Math.abs(m[r][i]) > Math.abs(m[p][i])) p = r;
      [m[i], m[p]] = [m[p], m[i]];
      for (let r = 0; r < 8; r++) {
        if (r === i) continue;
        const f = m[r][i] / m[i][i];
        for (let c = i; c < 9; c++) m[r][c] -= f * m[i][c];
      }
    }
    return m.map((row, i) => row[8] / row[i]);
  }
  const H = solve([
    [[677, 408], [1046, 192]],
    [[677, 107], [813, 323.5]],
    [[227, 408], [1422, 356]],
    [[471.7, 133], [986.7, 412.3]]
  ]);
  const depth = p => H[6] * p[0] + H[7] * p[1] + 1;
  const sign = Math.sign(depth([677, 408]));
  const proj = p => {
    const w = depth(p);
    return [(H[0] * p[0] + H[1] * p[1] + H[2]) / w, (H[3] * p[0] + H[4] * p[1] + H[5]) / w];
  };
  const near = Math.abs(depth([677, 408])) * .12;
  function line3(a, b) {
    const wa = depth(a) * sign, wb = depth(b) * sign;
    if (wa < near && wb < near) return '';
    const cut = (p, wp, q, wq) => {
      if (wp >= near) return p;
      const t = (near - wp) / (wq - wp);
      return [p[0] + (q[0] - p[0]) * t, p[1] + (q[1] - p[1]) * t];
    };
    return path([proj(cut(a, wa, b, wb)), proj(cut(b, wb, a, wa))]);
  }
  let minor = '', major = '';
  const step = 13.06, x0 = 98.3, y0 = 107.3, far = 2600;
  for (let i = -200; i <= 200; i++) {
    const x = x0 + i * step, y = y0 + i * step;
    const d = line3([x, y0 - far], [x, y0 + far]) + (i === 40 ? '' : line3([x0 - far, y], [x0 + far, y]));
    if (i % 10) minor += d; else major += d;
  }
  const P = (pts, close) => path(pts.map(proj), close);
  document.getElementById('scene-persp').innerHTML =
    '<defs><linearGradient id="plate-fill" x1="0" y1="0" x2="0" y2="1"><stop offset="0" stop-color="#20222a"/><stop offset=".5" stop-color="#373841"/><stop offset="1" stop-color="#4a4b52"/></linearGradient></defs>' +
    `<g class="grid-fine">${shape('grid-minor', minor)}</g>` + shape('grid-major', major) +
    shape('axis-red', line3([x0 - far, y0 + 40 * step], [x0 + far, y0 + 40 * step])) +
    flanges.map(f => shape('edge-thin', P(f))).join('') +
    smallHoles.map(h => shape('edge-thin', P(h, true))).join('') +
    shape('plate', P(plate, true)) +
    bigHoles.map(h => shape('plate-hole', P(h, true))).join('') +
    frames.map(f => shape('plate-frame', P(f, true))).join('') +
    shape('plate-vent', vents.map(v => P([v[0], v[2], v[4], v[6]], true)).join('')) +
    handle(1170.5, 288.5) +
    shape('gnomon', 'M849.5 343V381L820 366M849.5 381L824 400') + label(852, 348, 'z') + label(818, 368, 'x') + label(822, 405, 'y');
})();
```
